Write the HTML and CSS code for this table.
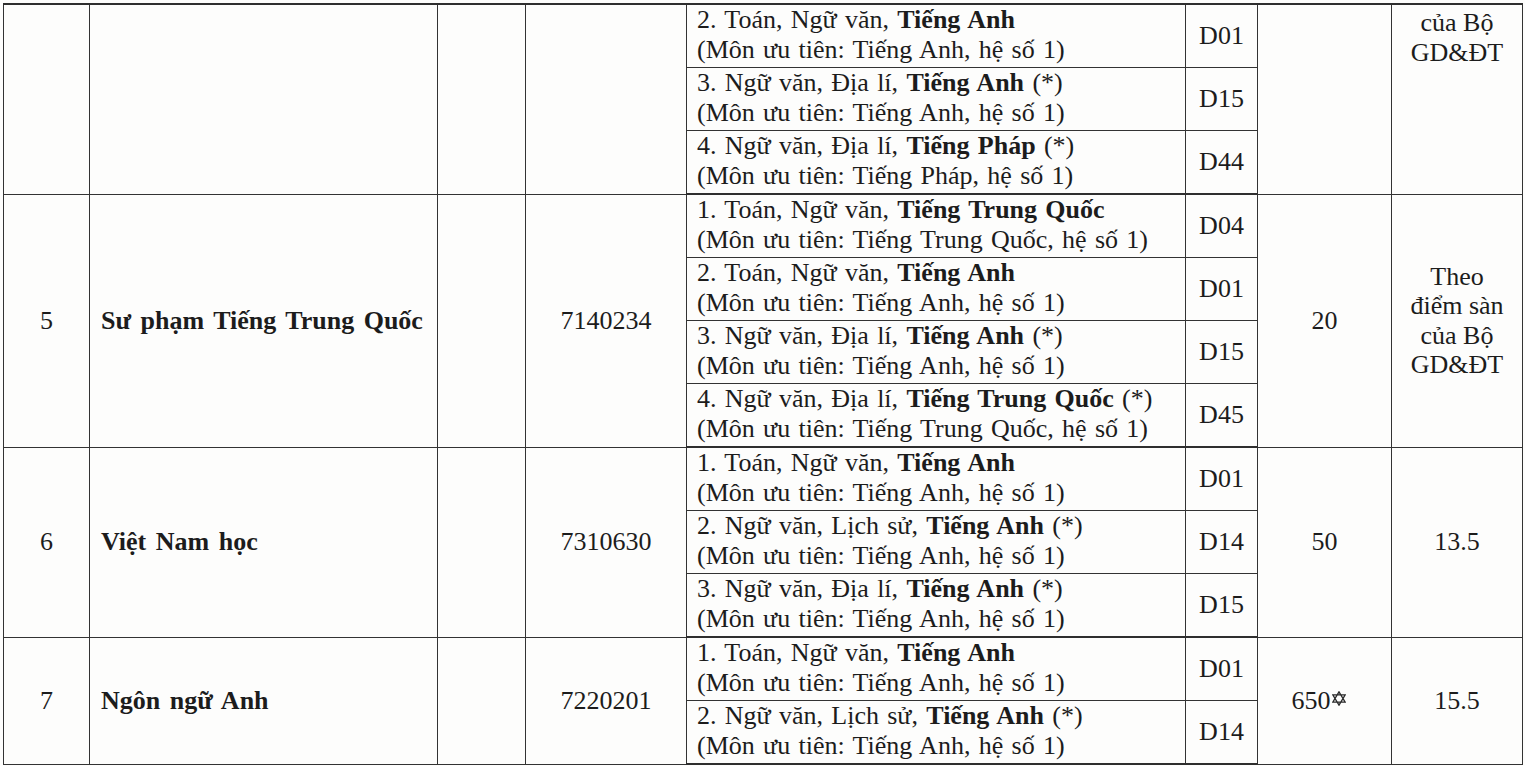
FILE: index.html
```html
<!DOCTYPE html>
<html lang="vi">
<head>
<meta charset="utf-8">
<title>Bảng ngành tuyển sinh</title>
<link rel="stylesheet" href="styles.css">
</head>
<body>
<table class="grid">
  <colgroup>
    <col class="c-no"><col class="c-name"><col class="c-blank"><col class="c-code">
    <col class="c-combo"><col class="c-cc"><col class="c-quota"><col class="c-score">
  </colgroup>
  <tbody>
    <tr class="first">
      <td rowspan="3"></td><td rowspan="3"></td><td rowspan="3"></td><td rowspan="3"></td>
      <td class="combo">2. Toán, Ngữ văn, <b>Tiếng Anh</b><br>(Môn ưu tiên: Tiếng Anh, hệ số 1)</td>
      <td class="cc">D01</td>
      <td rowspan="3"></td>
      <td rowspan="3" class="score top">của Bộ<br>GD&amp;ĐT</td>
    </tr>
    <tr>
      <td class="combo">3. Ngữ văn, Địa lí, <b>Tiếng Anh</b> (*)<br>(Môn ưu tiên: Tiếng Anh, hệ số 1)</td>
      <td class="cc">D15</td>
    </tr>
    <tr class="end">
      <td class="combo">4. Ngữ văn, Địa lí, <b>Tiếng Pháp</b> (*)<br>(Môn ưu tiên: Tiếng Pháp, hệ số 1)</td>
      <td class="cc">D44</td>
    </tr>

    <tr>
      <td rowspan="4" class="no">5</td>
      <td rowspan="4" class="name">Sư phạm Tiếng Trung Quốc</td>
      <td rowspan="4"></td>
      <td rowspan="4" class="mcode">7140234</td>
      <td class="combo">1. Toán, Ngữ văn, <b>Tiếng Trung Quốc</b><br>(Môn ưu tiên: Tiếng Trung Quốc, hệ số 1)</td>
      <td class="cc">D04</td>
      <td rowspan="4" class="num">20</td>
      <td rowspan="4" class="score">Theo<br>điểm sàn<br>của Bộ<br>GD&amp;ĐT</td>
    </tr>
    <tr>
      <td class="combo">2. Toán, Ngữ văn, <b>Tiếng Anh</b><br>(Môn ưu tiên: Tiếng Anh, hệ số 1)</td>
      <td class="cc">D01</td>
    </tr>
    <tr>
      <td class="combo">3. Ngữ văn, Địa lí, <b>Tiếng Anh</b> (*)<br>(Môn ưu tiên: Tiếng Anh, hệ số 1)</td>
      <td class="cc">D15</td>
    </tr>
    <tr class="end">
      <td class="combo">4. Ngữ văn, Địa lí, <b>Tiếng Trung Quốc</b> (*)<br>(Môn ưu tiên: Tiếng Trung Quốc, hệ số 1)</td>
      <td class="cc">D45</td>
    </tr>

    <tr>
      <td rowspan="3" class="no">6</td>
      <td rowspan="3" class="name">Việt Nam học</td>
      <td rowspan="3"></td>
      <td rowspan="3" class="mcode">7310630</td>
      <td class="combo">1. Toán, Ngữ văn, <b>Tiếng Anh</b><br>(Môn ưu tiên: Tiếng Anh, hệ số 1)</td>
      <td class="cc">D01</td>
      <td rowspan="3" class="num">50</td>
      <td rowspan="3" class="score">13.5</td>
    </tr>
    <tr>
      <td class="combo">2. Ngữ văn, Lịch sử, <b>Tiếng Anh</b> (*)<br>(Môn ưu tiên: Tiếng Anh, hệ số 1)</td>
      <td class="cc">D14</td>
    </tr>
    <tr class="end">
      <td class="combo">3. Ngữ văn, Địa lí, <b>Tiếng Anh</b> (*)<br>(Môn ưu tiên: Tiếng Anh, hệ số 1)</td>
      <td class="cc">D15</td>
    </tr>

    <tr>
      <td rowspan="2" class="no">7</td>
      <td rowspan="2" class="name">Ngôn ngữ Anh</td>
      <td rowspan="2"></td>
      <td rowspan="2" class="mcode">7220201</td>
      <td class="combo">1. Toán, Ngữ văn, <b>Tiếng Anh</b><br>(Môn ưu tiên: Tiếng Anh, hệ số 1)</td>
      <td class="cc">D01</td>
      <td rowspan="2" class="num quota-star">650<svg class="star" viewBox="0 0 14 15" aria-hidden="true"><path d="M7 0.8 L13.2 11.2 L0.8 11.2 Z M7 14.2 L0.8 3.8 L13.2 3.8 Z" fill="none" stroke="#2a2a2a" stroke-width="1.3" stroke-linejoin="miter"/></svg></td>
      <td rowspan="2" class="score">15.5</td>
    </tr>
    <tr class="end">
      <td class="combo">2. Ngữ văn, Lịch sử, <b>Tiếng Anh</b> (*)<br>(Môn ưu tiên: Tiếng Anh, hệ số 1)</td>
      <td class="cc">D14</td>
    </tr>
  </tbody>
</table>
</body>
</html>
```

FILE: styles.css
```css
html, body {
  margin: 0;
  background: #fdfdfc;
}

body {
  padding: 3px 0 0 3px;
  font-family: "Liberation Serif", "Times New Roman", serif;
  font-size: 26px;
  color: #1c1c1c;
}

.grid {
  border-collapse: collapse;
  table-layout: fixed;
  width: 1520px;
}

.c-no { width: 86px; }
.c-name { width: 348px; }
.c-blank { width: 88px; }
.c-code { width: 161px; }
.c-combo { width: 499px; }
.c-cc { width: 72px; }
.c-quota { width: 134px; }
.c-score { width: 131px; }

.grid td {
  border: 1px solid #333;
  padding: 0;
  height: 59.9px;
  line-height: 30px;
  vertical-align: middle;
}

.grid tr.end td {
  border-bottom: 2px solid #2e2e2e;
}

.grid tr.first td {
  border-top: 2px solid #2e2e2e;
}

.grid td.combo {
  padding: 0 4px 2px 10px;
  white-space: nowrap;
  word-spacing: 1.8px;
}

.grid td.cc,
.grid td.no,
.grid td.mcode,
.grid td.num,
.grid td.score {
  text-align: center;
}

.grid td.quota-star {
  padding-right: 12px;
}

.grid td.name {
  padding-left: 11px;
  font-weight: bold;
  word-spacing: 3px;
}

.grid td.score {
  line-height: 29.5px;
}

.grid td.top {
  vertical-align: top;
  padding-top: 3px;
}

.star {
  width: 14px;
  height: 15px;
  margin-left: 1px;
  vertical-align: 3px;
}
```
